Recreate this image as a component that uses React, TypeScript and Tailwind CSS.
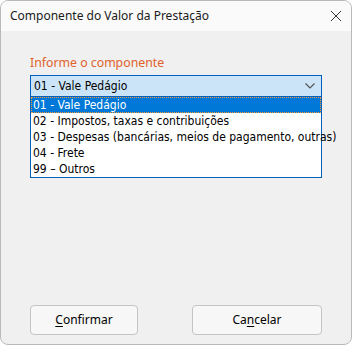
import React from 'react';

const options = [
  '01 - Vale Pedágio',
  '02 - Impostos, taxas e contribuições',
  '03 - Despesas (bancárias, meios de pagamento, outras)',
  '04 - Frete',
  '99 – Outros',
];

export default function App() {
  return (
    <div className="w-[352px] h-[345px] bg-white" style={{ fontFamily: '"Noto Sans", "Open Sans", sans-serif' }}>
      <div className="w-[352px] h-[345px] flex flex-col border border-[#b9b9b9] rounded-[8px] overflow-hidden bg-[#f0f0f0]">
        {/* title bar */}
        <div className="h-[30px] shrink-0 bg-[#fafafa] flex items-center justify-between pl-[9px] pr-[6px]">
          <span className="text-[12px] text-[#1a1a1a]">Componente do Valor da Prestação</span>
          <svg width="12" height="12" viewBox="0 0 12 12" className="mr-[3px]">
            <path d="M1 1 L11 11 M11 1 L1 11" stroke="#333" strokeWidth="1" fill="none" />
          </svg>
        </div>

        <div className="flex-1 flex flex-col px-[29px] pt-[24px]">
          <div className="text-[12.3px] leading-[16px] text-[#e0612a]">
            Informe o componente
          </div>

          <div
            className="mt-[4px] w-[292px] text-[12px]"
            style={{ fontFamily: '"DejaVu Sans Condensed", "DejaVu Sans", sans-serif' }}
          >
            <div className="h-[22px] bg-[#cce4f7] border border-[#0060c0] flex items-center justify-between pl-[3px] pr-[6px] text-black">
              <span>{options[0]}</span>
              <svg width="10" height="6" viewBox="0 0 10 6">
                <path d="M0.5 0.5 L5 5 L9.5 0.5" stroke="#555" strokeWidth="1.2" fill="none" />
              </svg>
            </div>
            <div className="border border-[#0060c0] border-t-0 bg-white leading-[16px] text-black">
              {options.map((o, i) => (
                <div
                  key={o}
                  className={
                    i === 0
                      ? 'h-[16px] bg-[#0078d7] text-white pl-[2px] outline outline-1 outline-dotted outline-[#f29a33] -outline-offset-1'
                      : 'h-[16px] pl-[2px] whitespace-nowrap'
                  }
                >
                  {o}
                </div>
              ))}
            </div>
          </div>

          <div className="mt-auto mb-[9px] flex justify-between">
            <button className="w-[108px] h-[30px] rounded-[4px] border border-[#c4c4c4] bg-[#f7f7f7] text-[12px] text-black">
              <span className="underline underline-offset-2">C</span>onfirmar
            </button>
            <button className="w-[130px] h-[30px] rounded-[4px] border border-[#c4c4c4] bg-[#f7f7f7] text-[12px] text-black">
              Ca<span className="underline underline-offset-2">n</span>celar
            </button>
          </div>
        </div>
      </div>
    </div>
  );
}
